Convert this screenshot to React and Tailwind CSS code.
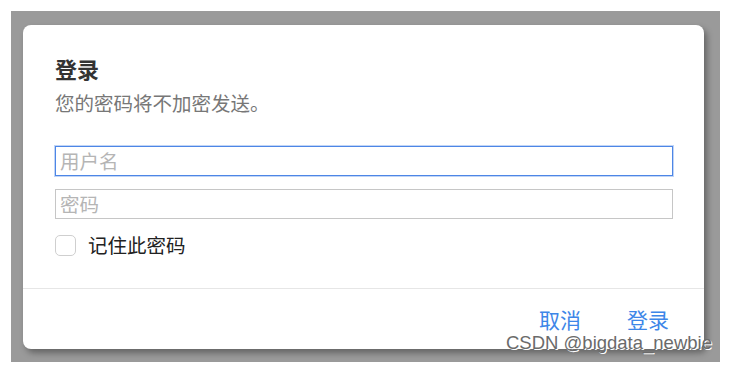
export default function App() {
  const font = { fontFamily: '"Noto Sans CJK SC", "Noto Sans", sans-serif' };
  return (
    <div className="w-[729px] h-[365px] bg-white pt-[11px] pl-[11px]" style={font}>
      <div className="relative w-[709px] h-[351px] bg-[#9a9a9a] pt-[14px] pl-[12px]">
        <div className="flex flex-col w-[681px] h-[324px] bg-white rounded-[8px] shadow-[3px_4px_6px_rgba(0,0,0,0.35)]">
          <div className="flex-1 pl-[32px] pr-[31px] pt-[29px]">
            <h2 className="text-[22px] leading-[28px] font-bold text-[#333]">登录</h2>
            <p className="mt-[8px] text-[19.5px] leading-[26px] text-[#777]">您的密码将不加密发送。</p>
            <div className="mt-[30px] flex flex-col gap-[13px]">
              <input
                type="text"
                placeholder="用户名"
                className="w-[618px] h-[30px] px-[4px] pb-[2px] text-[19.5px] border border-[#4d86e6] shadow-[0_0_0_1px_rgba(77,134,230,0.35)] outline-none placeholder:text-[#b5b5b5]"
              />
              <input
                type="password"
                placeholder="密码"
                className="w-[618px] h-[30px] px-[4px] pb-[2px] text-[19.5px] border border-[#c6c6c6] outline-none placeholder:text-[#b5b5b5]"
              />
            </div>
            <label className="mt-[14px] flex items-center gap-[12px]">
              <span className="w-[21px] h-[21px] rounded-[5px] border border-[#cfcfcf] bg-white"></span>
              <span className="text-[19.5px] leading-[24px] text-[#222]">记住此密码</span>
            </label>
          </div>
          <div className="h-[61px] border-t border-[#e6e6e6] flex items-center justify-end gap-[46px] pr-[35px] pt-[1px]">
            <button className="text-[21px] text-[#3d86e8]">取消</button>
            <button className="text-[21px] text-[#3d86e8]">登录</button>
          </div>
        </div>
        <span
          className="absolute left-[495px] top-[321px] text-[18.5px] leading-[22px] text-[#6b6b6b] [text-shadow:1px_1px_0_#fff]"
          style={{ fontFamily: '"Liberation Sans", Arial, sans-serif' }}
        >
          CSDN @bigdata_newbie
        </span>
      </div>
    </div>
  );
}
